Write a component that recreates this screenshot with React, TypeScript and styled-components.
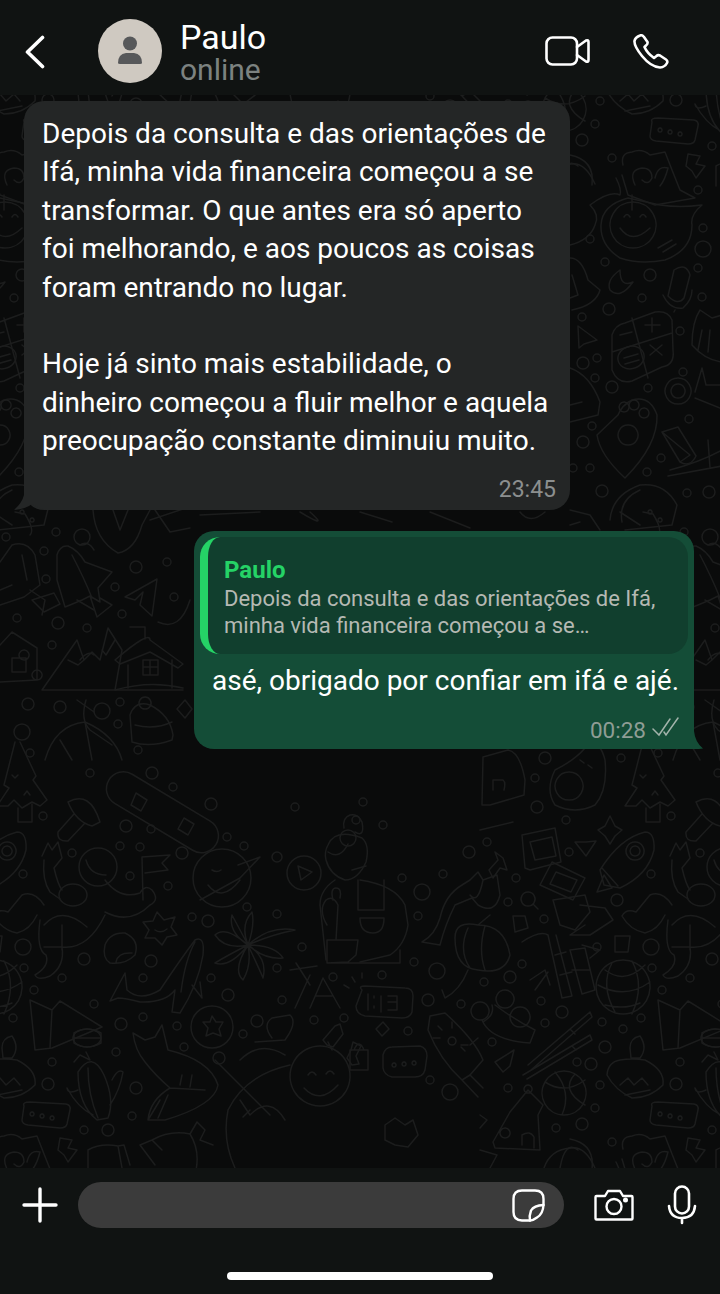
import styled, { createGlobalStyle } from "styled-components";

const GlobalStyle = createGlobalStyle`
  html, body {
    margin: 0;
    padding: 0;
    background: #0a0b0b;
    font-family: Roboto, "Liberation Sans", sans-serif;
  }
`;

const Screen = styled.div`
  width: 720px;
  height: 1294px;
  display: flex;
  flex-direction: column;
  overflow: hidden;
  color: #fff;
`;

const Header = styled.header`
  height: 95px;
  flex: none;
  background: #101312;
  display: flex;
  align-items: center;
  padding: 0 51px 0 24px;
  box-sizing: border-box;
`;

const BackButton = styled.span`
  width: 22px;
  height: 34px;
  display: flex;
  margin-right: 52px;
  margin-top: 8px;
`;

const Avatar = styled.div`
  width: 64px;
  height: 64px;
  border-radius: 50%;
  background: #cfc9c1;
  flex: none;
  display: flex;
  align-items: center;
  justify-content: center;
  margin-top: 7px;
`;

const Contact = styled.div`
  flex: 1;
  margin-left: 18px;
  margin-top: 12px;
  display: flex;
  flex-direction: column;
`;

const ContactName = styled.div`
  font-size: 34px;
  line-height: 33px;
  color: #fff;
`;

const ContactStatus = styled.div`
  font-size: 30px;
  line-height: 32px;
  color: #7c8280;
`;

const HeaderIcons = styled.div`
  display: flex;
  align-items: center;
  gap: 43px;
  margin-top: 7px;
`;

const Chat = styled.main`
  position: relative;
  flex: 1;
  min-height: 0;
  background: #0a0b0b;
  display: flex;
  flex-direction: column;
  padding: 6px 26px 0 24px;
  overflow: hidden;
`;

const Wallpaper = styled.svg`
  position: absolute;
  left: 0;
  top: 0;
`;

const Bubble = styled.div<{ $out?: boolean }>`
  position: relative;
  border-radius: 20px;
  background: ${({ $out }) => ($out ? "#144d37" : "#242626")};
  align-self: ${({ $out }) => ($out ? "flex-end" : "flex-start")};
  width: ${({ $out }) => ($out ? "500px" : "546px")};
  box-sizing: border-box;
  padding: ${({ $out }) => ($out ? "6px 6px 0" : "14px 14px 0 18px")};
  margin-top: ${({ $out }) => ($out ? "21px" : "0")};
  height: ${({ $out }) => ($out ? "218px" : "409px")};
`;

const Tail = styled.svg<{ $out?: boolean }>`
  position: absolute;
  bottom: ${({ $out }) => ($out ? "0" : "-1px")};
  ${({ $out }) => ($out ? "right: -9px;" : "left: -10px;")}
`;

const MessageText = styled.div`
  font-size: 28px;
  line-height: 38.4px;
  white-space: pre-line;
  color: #fff;
`;

const Meta = styled.div<{ $out?: boolean }>`
  display: flex;
  justify-content: flex-end;
  align-items: center;
  gap: 6px;
  font-size: ${({ $out }) => ($out ? "22.5px" : "23px")};
  line-height: 24px;
  color: ${({ $out }) => ($out ? "#8f9d95" : "#8c8f8f")};
  margin-top: ${({ $out }) => ($out ? "18px" : "17px")};
  padding-right: ${({ $out }) => ($out ? "8px" : "0")};
`;

const ReadTicks = styled.svg`
  margin-top: -6px;
`;

const Quote = styled.div`
  height: 117px;
  box-sizing: border-box;
  background: #113f2e;
  border-left: 8px solid #25d366;
  border-radius: 20px;
  padding: 20px 16px 0;
`;

const QuoteAuthor = styled.div`
  font-size: 24px;
  line-height: 26px;
  font-weight: 700;
  color: #25d366;
`;

const QuoteText = styled.div`
  font-size: 22px;
  line-height: 27px;
  color: #b5b9b3;
  white-space: pre-line;
  margin-top: 2px;
`;

const ReplyBody = styled.div`
  padding: 8px 0 0 12px;
`;

const Footer = styled.footer`
  height: 126px;
  flex: none;
  background: #101312;
  box-sizing: border-box;
  padding: 14px 20px 14px 22px;
  display: flex;
  flex-direction: column;
  justify-content: space-between;
`;

const Composer = styled.div`
  display: flex;
  align-items: center;
`;

const InputPill = styled.div`
  flex: none;
  width: 486px;
  height: 46px;
  border-radius: 23px;
  background: #3b3b3b;
  margin-left: 20px;
  margin-right: 30px;
  display: flex;
  align-items: center;
  justify-content: flex-end;
  padding-right: 19px;
  box-sizing: border-box;
`;

const MicIcon = styled.svg`
  margin-left: 33px;
`;

const HomeBar = styled.div`
  width: 266px;
  height: 8px;
  border-radius: 4px;
  background: #fff;
  align-self: center;
  margin-right: 2px;
`;

const IconStroke = {
  fill: "none",
  stroke: "#fff",
  strokeLinecap: "round",
  strokeLinejoin: "round",
} as const;

const dots: [number, number, number][] = [
  [152, 773, 6], [90, 773, 4], [173, 787, 4], [126, 826, 6], [151, 829, 4], [120, 846, 4], [140, 847, 4],
  [182, 853, 6], [211, 804, 6], [227, 837, 4], [72, 853, 4], [651, 874, 4], [43, 816, 4], [130, 876, 4],
  [168, 886, 4], [192, 917, 4], [208, 921, 6], [651, 947, 8], [84, 959, 6], [151, 961, 6], [143, 978, 4],
  [652, 968, 4], [62, 978, 4], [662, 990, 4], [94, 1004, 4], [211, 978, 4], [228, 995, 6], [143, 1017, 4],
  [121, 1024, 6], [641, 1018, 4], [177, 1026, 4], [184, 1047, 4], [116, 1052, 4], [52, 1062, 4], [219, 1058, 6],
  [48, 1084, 6], [136, 1088, 6], [132, 1116, 4], [108, 1130, 6], [84, 1130, 4],
  [244, 846, 4], [295, 807, 4], [277, 857, 5], [348, 838, 8], [356, 820, 4], [363, 802, 4], [383, 825, 4],
  [469, 852, 6], [487, 842, 4], [402, 878, 4], [443, 874, 4], [422, 892, 8], [418, 916, 4], [247, 907, 4],
  [277, 914, 4], [302, 947, 4], [277, 968, 4], [282, 1000, 4], [333, 977, 4], [382, 975, 4], [414, 962, 4],
  [437, 971, 8], [484, 982, 4], [428, 1000, 6], [461, 1004, 4], [257, 1021, 6], [314, 1020, 4], [344, 1018, 4],
  [243, 1034, 4], [408, 1031, 4], [492, 1042, 4], [430, 1080, 4], [450, 1092, 8],
  [545, 758, 6], [535, 778, 4], [537, 807, 6], [566, 820, 4], [621, 758, 4], [569, 852, 4], [516, 878, 4],
  [508, 902, 4], [544, 919, 4], [617, 900, 6], [597, 947, 4], [522, 964, 4], [510, 977, 6], [541, 1001, 4],
  [562, 1012, 6], [545, 1023, 4], [602, 1022, 4], [623, 1029, 4], [605, 1047, 6], [577, 1062, 4], [591, 1064, 6],
  [600, 1085, 4], [508, 1088, 4], [595, 1108, 4], [556, 1128, 4], [582, 1124, 6], [612, 1142, 4],
  [56, 532, 4], [82, 537, 8], [44, 551, 4], [634, 537, 4], [46, 579, 4], [115, 587, 4], [136, 567, 6],
  [167, 562, 4], [174, 597, 4], [122, 614, 4], [58, 623, 6], [645, 618, 4], [87, 628, 4], [52, 645, 4],
  [656, 704, 6], [60, 707, 6], [120, 702, 4], [102, 711, 8], [118, 724, 4], [650, 732, 8], [138, 750, 4], [658, 753, 4],
  [70, 190, 4], [703, 228, 4], [703, 249, 8], [590, 239, 4], [605, 262, 4], [650, 275, 6], [642, 298, 4],
  [698, 268, 4], [702, 297, 4], [609, 309, 6], [582, 317, 4], [680, 331, 4], [597, 358, 4], [595, 378, 4],
  [583, 363, 6], [612, 387, 6], [648, 388, 4], [683, 372, 4], [689, 419, 4], [592, 426, 4], [583, 442, 6],
  [661, 458, 4], [647, 472, 4], [602, 491, 6], [590, 468, 4], [573, 468, 4], [687, 493, 4], [709, 492, 6],
];

// wallpaper line art, coordinates are page pixels
const doodlePaths: string[] = [
  // tree
  "M643 742 L632 785 L637 788 L625 806 L636 806 L642 800 L650 808 L660 802 L668 806 L675 800 L661 780 L664 776 L648 742",
  "M646 808 V822 H660 V804 M640 775 l3 3 3 -3 M652 795 l3 -4 3 4",
  // mushroom
  "M68 802 Q90 790 100 822 L92 826 Q76 822 68 802Z M74 814 L58 832 Q57 842 68 841 L85 823",
  // snowboard bindings
  "M136 793 L147 800 L141 811 L131 805Z M184 818 L194 824 L188 835 L178 829Z",
  // astronaut
  "M143 900 L142 857 L170 855 L162 863 L168 870 L145 873",
  "M42 856 L48 843 L52 850 L58 842 L62 858 L54 868 Q58 885 62 890 M44 860 Q42 880 50 892 L60 899",
  "M105 880 Q120 900 140 893 Q145 884 152 890 Q160 900 150 905 Q130 925 105 912",
  "M44 925 Q62 905 87 927 M40 920 Q36 950 46 955 Q50 966 35 975 Q38 981 50 976 Q65 966 62 947 Q88 950 105 915 M62 925 V950 M44 947 H62",
  "M622 916 Q626 908 636 912 L650 895 Q662 890 672 905 M622 916 Q630 930 645 933 Q658 930 665 915",
  "M86 860 Q90 875 106 875",
  // burst
  "M157 912 L164 920 L175 917 L171 927 L177 935 L167 937 L162 945 L155 938 L145 938 L149 930 L143 922 L153 921Z M155 930 Q161 934 167 929",
  // pebble
  "M105 945 Q110 932 125 933 Q140 940 135 955 Q125 965 110 963 Q102 958 105 945Z M116 962 Q118 952 132 953",
  // whale
  "M110 1001 L125 973 L127 990 Q140 1002 160 990 Q180 960 195 940 Q205 935 203 955 Q198 985 180 1013 L172 1012 L175 990 Q165 1003 140 1002 Q125 998 118 998Z M195 942 Q185 960 181 992 M192 985 L202 998 L200 982",
  // star in blueberry
  "M212 1016 L216 1022 L223 1022 L219 1029 L221 1036 L213 1033 L206 1036 L208 1028 L203 1022 L210 1022Z",
  // fox
  "M133 1033 L145 1040 L155 1037 L162 1025 L168 1050 Q210 1060 218 1085 Q215 1105 165 1120 L148 1120 Q150 1100 170 1088 Q155 1075 145 1062 Q135 1050 133 1033Z M170 1088 L205 1090 M180 1085 L182 1075 M190 1087 L192 1075 M148 1120 L160 1100 M158 1118 L168 1095",
  // party hat
  "M30 1000 L52 1010 L60 1001 L102 1027 L52 1048 L35 1050Z M52 1010 L50 1048",
  "M74 1033 Q87 1025 101 1033 M74 1043 Q87 1051 101 1043 M74 1033 V1043 M101 1033 V1043 M74 1038 H101",
  // cactus
  "M78 1072 Q92 1050 104 1075 Q115 1100 108 1118 L97 1120 Q78 1105 78 1072Z M88 1068 Q88 1095 98 1118 M78 1090 Q68 1095 67 1088 M67 1088 Q78 1108 93 1115 M112 1080 Q118 1068 123 1072 Q120 1090 110 1105 M74 1062 L80 1055 L90 1060 L86 1052",
  // cassette
  "M24 1106 Q22 1102 30 1102 L66 1104 Q71 1105 70 1110 L67 1124 Q66 1128 60 1128 L28 1125 Q22 1124 22 1120Z",
  "M32 1112 a2 2 0 1 0 .1 0 M42 1114 a2 2 0 1 0 .1 0 M52 1116 a2 2 0 1 0 .1 0",
  // lightning
  "M60 1138 L72 1140 L68 1148 L77 1150 L68 1162 L64 1155 L58 1150Z",
  // bottom tent and palm fruit
  "M88 1170 V1150 Q100 1143 118 1146 L124 1145 L130 1165 M118 1146 L122 1168",
  "M140 1145 L152 1140 Q170 1130 190 1134 L197 1122 L205 1130 L200 1140 L213 1145 M152 1140 L162 1150 M140 1145 L155 1165 M190 1134 Q200 1150 196 1170",
  // woman with cactus
  "M355 832 Q365 838 362 822 Q358 813 350 815 Q342 818 344 828 M328 845 Q335 828 362 838 Q370 845 366 862 Q358 880 345 880 Q330 875 326 860 Q324 852 328 845Z",
  "M328 852 Q340 860 348 844 M352 870 L366 866",
  "M335 880 Q320 890 320 905 L326 960 M360 880 Q395 885 405 905 L408 925 Q405 945 390 955 L360 962",
  "M358 880 V910 H384 V880 M360 918 Q360 933 373 933 Q384 933 384 918 Z",
  "M327 940 H358 L356 955 L348 962 L327 963Z M327 963 H400 V950 M327 925 Q318 910 326 900 Q333 895 338 905 L336 940 M333 900 Q330 888 336 888 Q342 888 340 898",
  // play
  "M298 866 L312 872 L301 880Z",
  // face with beak
  "M212 870 q5 3 9 0 M208 885 Q222 903 240 880 M200 900 L240 878 L260 857 L238 865",
  // flower
  "M248 945 Q225 925 215 935 Q225 950 248 945 M248 945 Q228 955 215 963 Q230 968 248 945 M248 945 Q232 970 243 980 Q252 965 248 945 M248 945 Q262 975 263 978 Q268 958 248 945 M248 945 Q265 960 283 958 Q275 945 248 945 M248 945 Q270 935 295 930 Q270 925 248 945 M248 945 Q255 925 252 912 Q240 925 248 945 M248 945 Q240 930 232 915 Q228 932 248 945",
  // dolphin
  "M422 942 Q435 935 440 918 Q445 895 462 885 L470 880 L478 872 L483 880 L497 875 L500 895 Q495 915 478 905 L472 898 L455 905 Q445 925 440 945Z M470 895 Q478 905 483 880",
  // balloon / pumpkin
  "M455 938 Q455 920 478 925 Q505 925 510 955 Q505 975 478 970 Q455 968 455 938Z M468 928 Q458 950 470 968 M485 926 Q478 950 485 970 M478 925 L490 915",
  "M468 970 Q460 990 445 998 L442 990",
  // clock
  "M362 990 Q358 986 365 986 L405 988 Q413 988 413 996 L412 1012 Q410 1018 402 1018 L365 1016 Q356 1014 356 1006Z",
  "M349 988 l-5 -3 M355 982 l-3 -5 M362 978 l0 -5",
  "M368 994 V1010 M374 996 v2 M374 1006 v2 M381 996 V1012 M388 996 h9 v6 h-9 M397 1002 v8 h-9",
  // sparkles
  "M383 1022 L389 1029 L382 1036 L376 1029Z",
  "M335 1026 L340 1024 L343 1034 L333 1047 L327 1045 L323 1040Z M328 1042 L332 1050",
  "M290 970 L317 966 M296 963 L310 985 M310 975 L295 1008 M323 978 L310 1008 M323 978 L340 1008 M316 996 H332",
  // speech bubble
  "M383 1055 Q385 1047 392 1047 L420 1046 Q427 1048 427 1056 L425 1070 Q423 1077 415 1077 L392 1077 Q384 1075 383 1068Z",
  "M394 1063 a2 2 0 1 0 .1 0 M404 1062 a2 2 0 1 0 .1 0 M414 1061 a2 2 0 1 0 .1 0",
  // lantern
  "M430 1016 L445 1013 Q475 1040 483 1060 L470 1075 L462 1080 Q440 1060 428 1030Z M470 1075 L483 1088 M462 1080 L478 1097",
  "M452 1037 a4 4 0 1 0 .1 0 M452 1022 V1028 M440 1038 H433 M468 1045 H461 M442 1030 l-4 -4 M461 1047 l4 4",
  // smiling big face and blob
  "M320 1046 a30 30 0 1 0 .1 0 M308 1075 q4 -6 8 0 M326 1074 q4 -6 8 0 M304 1088 Q320 1105 338 1085",
  "M255 1042 L285 1040 Q298 1022 290 1015 L272 1018 Q262 1025 272 1038 M240 1060 Q260 1040 285 1055",
  "M228 1110 Q245 1075 290 1065 M228 1110 Q222 1140 235 1168",
  "M215 1060 L270 1115 M240 1100 L250 1115 Q270 1095 285 1120",
  // little blobs
  "M385 1125 L395 1118 L405 1125 L413 1120 L418 1135 L408 1147 L395 1145 L385 1140Z",
  "M353 1042 L361 1046 L356 1056 L359 1064 L352 1065 L347 1058 L351 1050Z",
  "M243 1117 L250 1110 M470 1045 L478 1038",
  // padlock
  "M350 1050 h18 v20 h-18z M354 1050 q5 -12 10 0",
  // avocado with pit
  "M585 748 Q575 760 555 770 Q545 790 555 805 Q575 815 595 805 Q608 790 605 760 Q603 752 600 748",
  "M569 772 a14 14 0 1 0 .1 0 M580 760 l4 3 M588 765 l4 3",
  // house at the top edge of this column
  "M483 757 L508 750 Q520 752 525 780 L524 795 L490 805 L482 805Z M493 790 V780 H503 Q506 782 504 790",
  "M480 830 L513 822",
  // polaroid squares
  "M522 835 L555 828 L561 862 L530 870 L525 868Z M530 842 L552 837 L556 856 L535 860Z",
  "M540 885 L552 862 L585 878 L573 900Z M550 884 L556 872 L577 880 L571 892Z",
  "M553 900 L585 895 L590 912 L575 930 L560 925Z M580 905 L605 908 L613 920 L590 935 L570 935 L585 925",
  // sparkle small
  "M495 852 L503 858 L507 870 L500 868 L493 878 L489 870 L498 860Z",
  "M605 826 L610 816 L615 826 L622 830 L615 836 L610 844 L605 836 L598 830Z",
  "M513 916 L525 916 L528 928 L515 932Z",
  "M615 936 H630 L628 952 H615Z",
  "M586 842 L596 841 L586 856 L575 842Z",
  "M528 892 a7 7 0 1 0 .1 0 M534 905 l4 4",
  // rocket
  "M600 870 Q620 838 645 832 Q655 832 654 850 Q648 875 620 888 L604 885Z M602 868 L618 886 M597 892 L604 875 L612 888 Z",
  "M635 842 a9 9 0 1 0 .1 0 M635 846 a5 5 0 1 0 .1 0",
  // bamboo
  "M522 942 Q540 930 548 935 L562 998 L572 996 L556 935 M555 955 L566 952 M560 975 L572 972 M570 950 L585 948 L595 990 L582 994Z M572 970 H590 M582 945 L600 950 L590 958 M530 980 L545 970 L550 985 M548 972 L535 990",
  // globe
  "M623 960 a27 27 0 1 0 .1 0 M605 970 Q625 985 645 965 M598 985 Q625 1000 650 982 M605 1005 Q625 1010 640 1003 M612 963 Q600 985 615 1012 M632 961 Q645 985 632 1014",
  // flower cluster
  "M480 1002 a9 9 0 1 0 .1 0 M505 990 a9 9 0 1 0 .1 0 M520 1007 a10 10 0 1 0 .1 0 M482 1020 Q490 1040 530 1043 L535 1030 Q515 1020 495 1005 M483 1022 Q495 1015 492 1005",
  // chopsticks
  "M528 1065 L590 1012 L592 1017 L531 1070 M523 1075 L590 1035 L592 1040 L527 1079 M570 1029 L575 1034 M572 1046 L576 1050",
  // triangle by chopsticks
  "M495 1062 L514 1050 L510 1066 L503 1072Z",
  // basketball
  "M564 1071 a22 22 0 1 0 .1 0 M545 1082 Q565 1095 585 1080 M555 1072 Q572 1092 562 1115 M575 1074 Q560 1090 585 1105",
  // diya
  "M620 1060 Q632 1058 645 1060 Q665 1070 663 1085 Q650 1098 632 1098 Q615 1090 607 1075 Q608 1062 620 1060Z M630 1048 Q630 1038 640 1036 Q648 1048 640 1058 L631 1058Z",
  "M620 1085 L628 1078 L634 1085 L642 1078 L648 1085 M625 1095 L650 1090",
  // little cottage
  "M493 1142 L510 1112 L528 1090 L543 1105 L538 1115 L540 1150 L495 1148Z M505 1128 a5 5 0 1 0 .1 0 M522 1145 V1135 Q530 1130 534 1137 V1148 M528 1085 a4 4 0 1 0 .1 0",
  "M480 1115 L487 1120 L480 1128",
  "M480 1150 L497 1155 L490 1168 M560 1168 Q565 1140 578 1150",
  // doughnut bottom arcs
  "M544 1168 Q550 1150 570 1148 Q585 1145 595 1168",
  // creature with curls: hair
  "M623 165 Q620 153 632 152 Q642 148 650 155 L665 152 L672 170 L680 190 L695 198 L655 205 L628 195 L622 175",
  "M635 185 Q628 170 642 168 Q652 168 652 178 Q648 186 642 180 M655 178 Q658 165 668 168 Q665 180 660 186 M632 195 V210",
  // blob with smiley
  "M702 205 Q690 215 692 225 Q692 250 665 260 Q640 265 620 258 Q600 245 601 225 Q602 205 628 198 L660 205 Q680 208 702 205Z",
  "M633 202 a23 23 0 1 0 .1 0 M624 217 q3 -5 6 0 M640 217 q3 -5 6 0 M620 228 Q632 245 650 228 M658 248 L672 240 M663 252 L676 244",
  // arcs at the left of the blob
  "M570 155 Q595 160 592 185 M570 245 Q590 240 595 225 Q600 215 590 205 Q610 190 620 195 Q622 190 616 178",
  // padlock
  "M570 258 Q582 258 588 280 L600 290 Q596 305 572 310 M572 275 L578 295 L570 298",
  // moon
  "M620 270 Q606 280 610 290 Q620 300 633 282 Q620 288 620 270Z",
  // mic
  "M674 270 Q686 262 690 275 L684 298 Q678 306 668 296Z M663 295 Q670 310 683 308 Q692 300 692 290 M675 310 L674 312",
  // triangle
  "M578 326 L597 340 L584 344 L579 348Z",
  // calculator
  "M612 335 Q615 325 625 323 L655 312 Q668 310 672 320 L673 350 Q675 365 662 367 L632 381 Q618 385 612 370Z M632 318 L648 378 M612 352 L672 333 M620 335 L632 332 M645 325 H660 M652 318 V332 M650 345 L662 355 M662 345 L650 355",
  "M618 360 a13 11 -15 1 0 26 -5 a13 11 -15 1 0 -26 5 M624 358 L638 354 M625 364 L639 360",
  // half shell
  "M570 368 Q590 375 600 402 L598 415 L570 422 M570 405 L582 402",
  // paw ghost
  "M597 435 L618 415 Q622 405 632 400 Q650 395 657 415 Q658 445 625 478 Q600 455 597 435Z",
  "M628 425 a10 10 0 1 0 .1 0 M624 402 a5 5 0 1 0 .1 0 M634 400 a5 5 0 1 0 .1 0 M644 408 a5 5 0 1 0 .1 0",
  // scissors
  "M678 378 a13 13 0 1 0 .1 0 M678 384 a7 7 0 1 0 .1 0 M695 392 L702 368 L706 385 L722 385 M695 398 L720 408",
  // tube
  "M662 432 L678 427 L696 456 Q690 468 680 462 L690 455 Z M662 432 L680 462",
  // knife
  "M670 470 Q700 462 722 450 M668 476 L722 466 M710 468 L708 440",
  // taco
  "M610 520 Q612 495 640 485 Q665 482 677 505 L672 525 L625 530 M622 522 Q618 500 640 490 M650 510 a2 2 0 1 0 .1 0 M660 518 a2 2 0 1 0 .1 0",
  // cat
  "M692 345 Q692 322 700 310 L712 318 L722 315 M692 345 Q705 360 722 362 M702 330 L698 350 M710 330 L708 352",
  // shell corner
  "M570 510 L590 515 L600 530 M570 525 L580 522",
  // shield rock under first bubble
  "M93 510 Q95 540 118 553 Q135 550 142 525 L150 510 M113 510 L120 530 L128 510 M150 520 L195 505",
  "M15 512 L25 514 Q35 530 30 535 M155 510 L170 532 L190 528",
  "M200 515 L260 512 M300 512 Q330 530 310 512 M360 512 L392 522 M430 512 L470 528 M520 512 Q530 525 545 512 M620 512 L640 525",
  // scroll at the left edge
  "M628 562 L640 545 Q655 540 663 555 L668 585 L652 597 L628 605 M650 555 L655 580",
  "M628 590 L640 585",
  "M30 590 L45 600 L42 615",
  // rocket two
  "M57 555 Q60 545 68 546 Q78 550 85 562 L112 572 L98 588 L100 602 L90 596 L82 600 L70 605 L65 607 L57 580Z M72 555 Q85 580 92 598 M90 596 L97 617 L112 605 L100 598",
  // paper plane
  "M125 597 L157 579 L152 616 L140 605 L143 592 L135 600Z",
  // mountains
  "M42 690 L77 640 L84 660 L92 652 L100 660 L108 628 L122 650 L115 690 M42 690 H183 M68 660 L78 665 L84 660 M102 650 L106 655 L115 640",
  // house with snow
  "M115 660 Q150 630 150 640 L183 664 L178 668 L150 652 L120 664Z M128 665 V688 M172 660 V688 M143 660 h15 v15 h-15z M150 660 v15 M143 667 h15 M130 627 h15 v12 M158 622 Q180 632 190 600",
  "M115 690 Q150 680 183 688",
  // cabin
  "M628 645 L640 632 L665 648 V680 L628 682 M640 658 h14 v14 h-14z M652 650 a5 5 0 1 0 .1 0 M665 670 a5 5 0 1 0 .1 0",
  // curly line
  "M86 700 Q80 720 90 730 L112 745",
  // beanie
  "M130 715 Q135 700 150 705 Q170 715 173 735 L172 740 Q150 748 132 742Z M135 725 Q155 730 172 722",
  "M145 697 a6 6 0 1 0 .1 0",
  // sparkle near beanie
  "M185 700 L192 709 L185 718 L177 709Z",
  // shrimp
  "M45 760 Q55 725 85 722 Q115 735 122 760 M60 740 L72 760 M85 722 L92 760",
  // arrow near house
  "M660 600 L682 593 L688 604 L672 612Z",
  // right column shapes next to the outgoing bubble
  "M708 545 Q716 540 722 550 M705 600 L722 610 M708 660 Q716 650 722 655 M705 700 L722 712",
];

const offsets = [-628, 0, 628].flatMap((dx) => [-984, 0, 984].map((dy) => [dx, dy]));

const DoodleWallpaper = () => (
  <Wallpaper width="720" height="1073" viewBox="0 95 720 1073">
    <defs>
      <g id="doodle-tile" fill="none" stroke="#1c1d1d" strokeWidth="1.5" strokeLinecap="round" strokeLinejoin="round">
        {doodlePaths.map((d, i) => (
          <path key={i} d={d} />
        ))}
        {dots.map(([x, y, r], i) => (
          <circle key={i} cx={x} cy={y} r={r} />
        ))}
        <rect x="100" y="795" width="125" height="34" rx="17" transform="rotate(31 162 812)" />
        <circle cx="98" cy="867" r="19" />
        <ellipse cx="73" cy="895" rx="14" ry="11" />
        <circle cx="212" cy="1027" r="21" />
        <ellipse cx="87" cy="1038" rx="14" ry="9" />
        <circle cx="304" cy="873" r="17" />
        <circle cx="222" cy="878" r="29" />
      </g>
    </defs>
    {offsets.map(([dx, dy]) => (
      <use key={`${dx}-${dy}`} href="#doodle-tile" x={dx} y={dy} />
    ))}
  </Wallpaper>
);

const App = () => {
  return (
    <>
      <GlobalStyle />
      <Screen>
        <Header>
          <BackButton>
            <svg width="22" height="34" viewBox="0 0 22 34" {...IconStroke} strokeWidth="3.6">
              <path d="M18.5 2.5 L3.5 17 L18.5 31.5" />
            </svg>
          </BackButton>
          <Avatar>
            <svg width="28" height="30" viewBox="0 0 28 30" fill="#57585a">
              <circle cx="14" cy="7.5" r="7" />
              <path d="M2 27 Q2 18 10 17 H18 Q26 18 26 27 Q26 28 24 28 H4 Q2 28 2 27Z" />
            </svg>
          </Avatar>
          <Contact>
            <ContactName>Paulo</ContactName>
            <ContactStatus>online</ContactStatus>
          </Contact>
          <HeaderIcons>
            <svg width="45" height="30" viewBox="0 0 45 30" {...IconStroke} strokeWidth="2.6">
              <rect x="1.5" y="1.5" width="30.5" height="27" rx="6" />
              <path d="M32 11 L41 4.5 Q43.5 3.5 43.5 6 V24 Q43.5 26.5 41 25.5 L32 19" />
            </svg>
            <svg width="36" height="35" viewBox="0 0 36 35" {...IconStroke} strokeWidth="2.6">
              <path d="M7 1.5 Q9 0.5 11 3 L14.5 8 Q15 10 13 11.5 L11.5 13 Q14 19 21 24 L23.5 22 Q25 20.5 27 21.5 L33 25.5 Q35 27 34 29 Q32 33 27 33.5 Q18 33 9 22 Q1 12 1.5 7 Q2 3.5 7 1.5Z" />
            </svg>
          </HeaderIcons>
        </Header>
        <Chat>
          <DoodleWallpaper />
          <Bubble>
            <Tail width="32" height="26" viewBox="0 0 32 26">
              <path d="M10 0 V10 Q8 18 0 25 Q12 24 18 19 Q24 23 32 25 V0Z" fill="#242626" />
            </Tail>
            <MessageText>
              {"Depois da consulta e das orientações de\nIfá, minha vida financeira começou a se\ntransformar. O que antes era só aperto\nfoi melhorando, e aos poucos as coisas\nforam entrando no lugar.\n\nHoje já sinto mais estabilidade, o\ndinheiro começou a fluir melhor e aquela\npreocupação constante diminuiu muito."}
            </MessageText>
            <Meta>23:45</Meta>
          </Bubble>
          <Bubble $out>
            <Tail $out width="30" height="20" viewBox="0 0 30 20">
              <path d="M0 0 H21 V2 Q22 13 30 19.5 Q26 20 22 20 H0Z" fill="#144d37" />
            </Tail>
            <Quote>
              <QuoteAuthor>Paulo</QuoteAuthor>
              <QuoteText>{"Depois da consulta e das orientações de Ifá,\nminha vida financeira começou a se…"}</QuoteText>
            </Quote>
            <ReplyBody>
              <MessageText>asé, obrigado por confiar em ifá e ajé.</MessageText>
            </ReplyBody>
            <Meta $out>
              00:28
              <ReadTicks width="28" height="20" viewBox="0 0 28 20" fill="none" stroke="#a3b3ab" strokeWidth="1.5" strokeLinecap="round">
                <path d="M1 12 L7 18 L18 2 M12 15 L14 18 L26 1" />
              </ReadTicks>
            </Meta>
          </Bubble>
        </Chat>
        <Footer>
          <Composer>
            <svg width="36" height="36" viewBox="0 0 36 36" {...IconStroke} strokeWidth="3.4">
              <path d="M18 2 V34 M2 18 H34" />
            </svg>
            <InputPill>
              <svg width="33" height="33" viewBox="0 0 33 33" {...IconStroke} strokeWidth="2.4">
                <path d="M18 31.5 H10 Q1.5 31.5 1.5 23 V10 Q1.5 1.5 10 1.5 H23 Q31.5 1.5 31.5 10 V16 Q31 25 25 28.5 Q21 31.5 18 31.5" />
                <path d="M18 31.5 Q17 27 19 21.5 Q22 16.5 31.5 16" />
              </svg>
            </InputPill>
            <svg width="40" height="32" viewBox="0 0 40 32" {...IconStroke} strokeWidth="2.4">
              <path d="M2.5 7 H11 L14 2 H26 L29 7 H37.5 Q38.5 7 38.5 8 V29.5 Q38.5 30.5 37.5 30.5 H2.5 Q1.5 30.5 1.5 29.5 V8 Q1.5 7 2.5 7Z" />
              <circle cx="20" cy="17.5" r="7.5" />
              <circle cx="31.5" cy="11" r="1.3" fill="#fff" />
            </svg>
            <MicIcon width="30" height="40" viewBox="0 0 30 40" {...IconStroke} strokeWidth="2.6">
              <rect x="8" y="1.5" width="14" height="27" rx="7" />
              <path d="M2 21 Q3 33 15 33 Q27 33 28 21 M15 33 V38" />
            </MicIcon>
          </Composer>
          <HomeBar />
        </Footer>
      </Screen>
    </>
  );
};

export default App;
